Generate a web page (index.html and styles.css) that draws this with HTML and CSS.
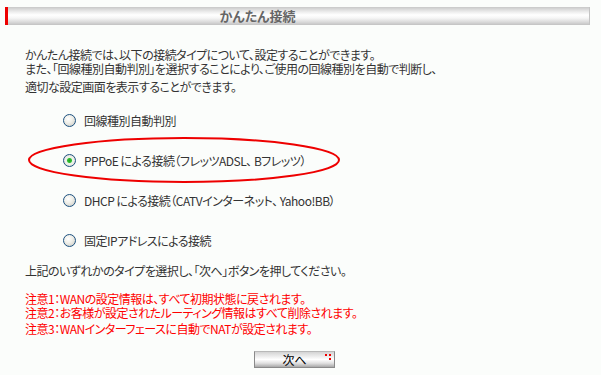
FILE: index.html
```html
<!DOCTYPE html>
<html lang="ja">
<head>
    <meta charset="UTF-8">
    <title>かんたん接続</title>
    <link rel="stylesheet" href="styles.css">
</head>
<body>
    <div class="page">
        <div class="title-bar">かんたん接続</div>

        <p class="intro">かんたん接続では、以下の接続タイプについて、設定することができます。<br>また、「回線種別自動判別」を選択することにより、ご使用の回線種別を自動で判断し、</p>
        <p class="intro-last">適切な設定画面を表示することができます。</p>

        <form class="conn-list">
            <label class="conn-row"><input type="radio" name="conn" value="auto"> 回線種別自動判別</label>
            <label class="conn-row"><input type="radio" name="conn" value="pppoe" checked> PPPoE による接続（フレッツADSL、 Bフレッツ）</label>
            <label class="conn-row"><input type="radio" name="conn" value="dhcp"> DHCP による接続（CATVインターネット、 Yahoo!BB）</label>
            <label class="conn-row"><input type="radio" name="conn" value="static"> 固定IPアドレスによる接続</label>

            <!-- red circle drawn over the PPPoE choice -->
            <svg class="highlight" width="320" height="50" viewBox="0 0 320 50">
                <ellipse cx="157" cy="24" rx="155" ry="22" fill="none" stroke="#ee0000" stroke-width="2"/>
            </svg>
        </form>

        <p class="hint">上記のいずれかのタイプを選択し、「次へ」ボタンを押してください。</p>

        <p class="notes">注意1：WANの設定情報は、すべて初期状態に戻されます。<br>注意2：お客様が設定されたルーティング情報はすべて削除されます。</p>
        <p class="notes notes-last">注意3：WANインターフェースに自動でNATが設定されます。</p>

        <div class="actions">
            <button type="button" class="next-btn">次へ<span class="dots"><i></i><i></i><i></i></span></button>
        </div>
    </div>
</body>
</html>
```

FILE: styles.css
```css
* {
    margin: 0;
    padding: 0;
    box-sizing: border-box;
}

body {
    background-color: #fbfdfb;
    color: #333333;
    font-family: "Noto Sans CJK JP", "Liberation Sans", sans-serif;
    font-size: 12px;
    font-feature-settings: "palt";
    letter-spacing: -0.5px;
    width: 601px;
    height: 375px;
    overflow: hidden;
}

.page {
    padding-top: 7px;
}

/* header strip with the red marker on the left */
.title-bar {
    margin-left: 5px;
    width: 585px;
    height: 18px;
    border-left: 3px solid #ee0000;
    border-right: 1px solid #c4c4c4;
    background: linear-gradient(#c8c8c8 0, #d8d8d8 2px, #eeeeee 5px, #ffffff 8px, #f6f6f6 11px, #dadada 15px, #c2c2c2 18px);
    color: #666666;
    font-size: 13px;
    font-weight: bold;
    letter-spacing: 0;
    line-height: 18px;
    text-align: center;
    padding-right: 82px;
}

.intro {
    margin: 23px 0 0 25px;
    line-height: 14px;
}

.intro-last {
    margin: 4px 0 0 25px;
    line-height: 14px;
}

.conn-list {
    position: relative;
    margin-top: 6px;
}

.conn-row {
    display: flex;
    align-items: center;
    gap: 8px;
    height: 40px;
    padding-left: 63px;
}

.conn-row input[type="radio"] {
    appearance: none;
    -webkit-appearance: none;
    width: 13px;
    height: 13px;
    border-radius: 50%;
    border: 1px solid #1c5180;
    background: radial-gradient(circle at 40% 35%, #ffffff 0, #f0f0ea 40%, #c8c8c0 100%);
    flex-shrink: 0;
}

.conn-row input[type="radio"]:checked {
    background: radial-gradient(circle, #21a121 0, #2fbf2f 2px, #e6f3e6 3px, #f0f0ea 4px, #cfcfc8 100%);
}

.highlight {
    position: absolute;
    left: 27px;
    top: 36px;
    pointer-events: none;
}

.hint {
    margin: 4px 0 0 25px;
    line-height: 14px;
}

.notes {
    margin: 14px 0 0 25px;
    line-height: 14px;
    color: #ff0000;
}

.notes-last {
    margin-top: 2px;
}

.actions {
    margin-top: 15px;
    padding-left: 254px;
}

.next-btn {
    position: relative;
    width: 81px;
    height: 17px;
    border: 1px solid #8a8a8a;
    border-top-color: #b8b8b8;
    background: linear-gradient(#d4d4d4 0, #f2f2f2 35%, #ffffff 50%, #e0e0e0 75%, #a8a8a8 100%);
    font-family: inherit;
    font-size: 12px;
    letter-spacing: 0;
    color: #000000;
    line-height: 15px;
}

/* little red squares in the corner of the button */
.dots {
    position: absolute;
    right: 3px;
    top: 2px;
    width: 6px;
    height: 6px;
}

.dots i {
    position: absolute;
    width: 2px;
    height: 2px;
    background: #ee0000;
}

.dots i:nth-child(1) { left: 0; top: 0; }
.dots i:nth-child(2) { left: 4px; top: 0; }
.dots i:nth-child(3) { left: 4px; top: 4px; }
```
